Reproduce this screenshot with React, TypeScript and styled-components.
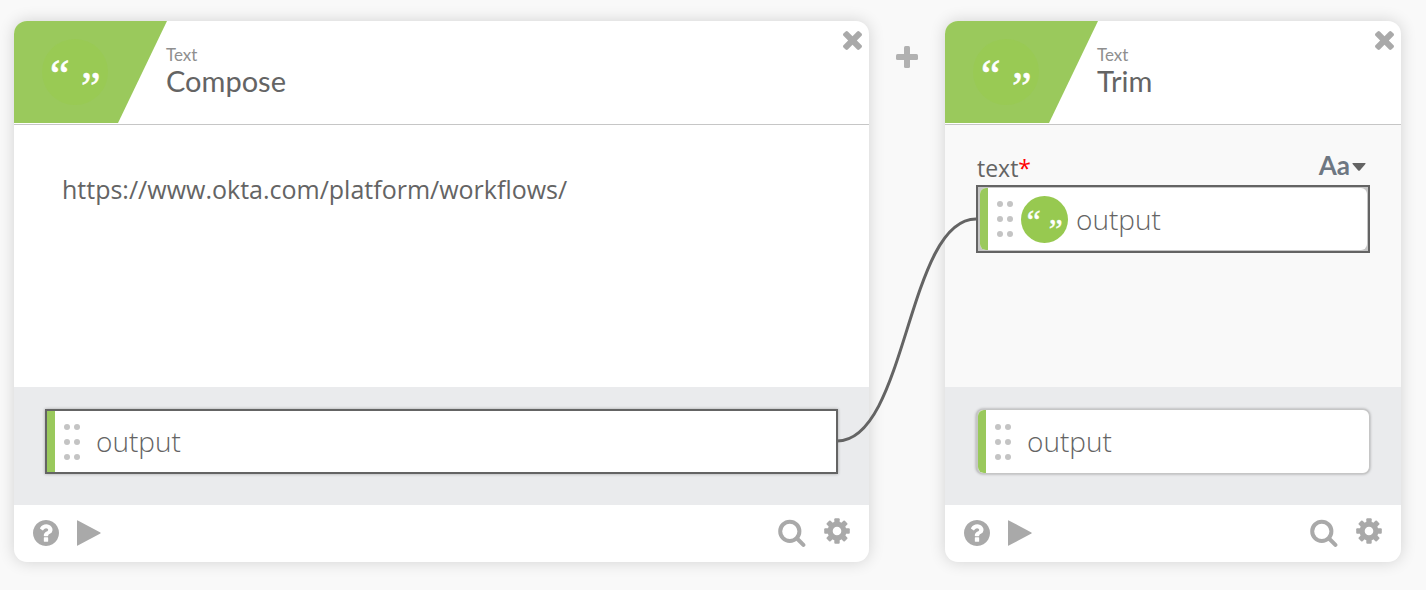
import React, { useState } from "react";
import styled, { createGlobalStyle, css } from "styled-components";

const colors = {
  page: "#f9f9f9",
  green: "#9ac95c",
  badge: "#97c950",
  badgeSoft: "#99ca54",
  ink: "#646464",
  muted: "#8f8f8f",
  icon: "#a9a9a9",
  line: "#c6c6c6",
  tray: "#eaebed",
};

const GlobalStyle = createGlobalStyle`
  *, *::before, *::after { box-sizing: border-box; }
  body {
    margin: 0;
    background: ${colors.page};
    color: ${colors.ink};
    font-family: "Open Sans", "Noto Sans", sans-serif;
  }
  button, input, textarea { font: inherit; color: inherit; }
`;

const Flow = styled.main`
  display: grid;
  grid-template-columns: minmax(0, 1fr) 76px 456px;
  padding: 21px 25px 28px 14px;
`;

const Card = styled.section`
  display: flex;
  flex-direction: column;
  border-radius: 13px;
  background: #fff;
  box-shadow: 0 0 16px rgba(0, 0, 0, 0.16);
`;

const CardHeader = styled.header`
  display: flex;
  align-items: flex-start;
  height: 104px;
  border-bottom: 1px solid ${colors.line};
`;

const Banner = styled.div`
  flex: none;
  width: 153px;
  height: 102px;
  padding: 18px 28px;
  background: ${colors.green};
  border-top-left-radius: 13px;
  clip-path: polygon(0 0, 100% 0, 104px 100%, 0 100%);
`;

const Heading = styled.div`
  flex: 1;
  min-width: 0;
  margin-left: -1px;
  padding-top: 25px;
  font-family: Lato, sans-serif;
`;

const Category = styled.p`
  margin: 0;
  font-size: 17px;
  line-height: 17px;
  color: ${colors.muted};
`;

const Title = styled.h2`
  margin: 0;
  font-size: 29px;
  font-weight: 400;
  line-height: 35px;
  color: ${colors.ink};
`;

const IconButton = styled.button`
  display: flex;
  flex: none;
  padding: 0;
  border: 0;
  background: none;
  color: ${colors.icon};
  cursor: pointer;
`;

const CloseButton = styled(IconButton)`
  margin: 10px 7px 0 0;
`;

const Body = styled.div<{ $tinted?: boolean }>`
  flex: 1;
  min-height: 262px;
  padding: ${(p) => (p.$tinted ? "27px 31px" : "46px 48px")};
  background: ${(p) => (p.$tinted ? colors.page : "#fff")};
`;

const ComposeArea = styled.textarea`
  display: block;
  width: 100%;
  height: 168px;
  padding: 0;
  border: 0;
  outline: 0;
  resize: none;
  background: none;
  font-size: 25px;
  line-height: 36px;
`;

const FieldHead = styled.div`
  display: flex;
  align-items: center;
  justify-content: space-between;
  height: 33px;
  padding: 0 4px 0 1px;
`;

const FieldLabel = styled.label`
  font-size: 23px;
  line-height: 33px;
`;

const Required = styled.span`
  color: #f00;
`;

const TypeButton = styled(IconButton)`
  align-items: flex-end;
  gap: 2px;
  padding-bottom: 7px;
  font-family: Lato, sans-serif;
  font-size: 26px;
  font-weight: 700;
  line-height: 28px;
  color: #6e7782;
`;

const Tray = styled.div`
  padding: 22px 31px 31px;
  background: ${colors.tray};
`;

const Pill = styled.div<{ $linked?: boolean }>`
  display: flex;
  align-items: center;
  height: 65px;
  background: #fff;
  ${(p) =>
    p.$linked
      ? css`
          border: 2px solid ${colors.ink};
          box-shadow: 0 0 3px rgba(0, 0, 0, 0.3);
        `
      : css`
          border: 1px solid ${colors.line};
          border-left-width: 2px;
          border-radius: 7px;
          box-shadow: 0 0 3px rgba(0, 0, 0, 0.35);
        `}
`;

const Socket = styled.div`
  height: 68px;
  border: 2px solid ${colors.ink};
  background: ${colors.line};
  padding: 1px 1px 1px 2px;
`;

const SocketInner = styled.div`
  display: flex;
  align-items: center;
  height: 62px;
  border-radius: 6px;
  overflow: hidden;
  background: #fff;
`;

const Strip = styled.span<{ $round?: boolean }>`
  flex: none;
  align-self: stretch;
  width: 8px;
  background: ${colors.green};
  border-radius: ${(p) => (p.$round ? "6px 0 0 6px" : "0")};
`;

const Grip = styled.span`
  display: grid;
  flex: none;
  grid-template-columns: 6px 6px;
  gap: 9px 4px;
  margin: 0 8px 0 9px;
`;

const Dot = styled.i`
  width: 6px;
  height: 6px;
  border-radius: 50%;
  background: #c4c4c4;
`;

const PillText = styled.span`
  padding: 0 0 2px 8px;
  font-size: 28px;
  font-weight: 300;
  line-height: 58px;
`;

const SocketInput = styled.input`
  flex: 1;
  min-width: 0;
  height: 62px;
  padding: 0 8px;
  border: 0;
  outline: 0;
  background: none;
  font-size: 28px;
  font-weight: 300;
`;

const Footer = styled.footer`
  display: flex;
  align-items: center;
  gap: 18px;
  height: 57px;
  padding: 0 19px 2px;
`;

const Spacer = styled.span`
  flex: 1;
`;

const Gap = styled.div`
  position: relative;
  display: flex;
  justify-content: center;
  align-items: flex-start;
  padding-top: 25px;
`;

const Wire = styled.svg`
  position: absolute;
  top: 190px;
  left: -32px;
  pointer-events: none;
`;

const Badge = styled.svg`
  display: block;
  flex: none;
  overflow: visible;
`;

function QuoteBadge({ size, fill }: { size: number; fill: string }) {
  return (
    <Badge width={size} height={size} viewBox="0 0 66 66" aria-hidden="true">
      <circle cx="33" cy="33" r="33" fill={fill} />
      <g
        fill="#fff"
        stroke="#fff"
        strokeWidth="0.6"
        fontFamily="Liberation Serif, serif"
        fontSize="44"
      >
        <text x="8" y="51">“</text>
        <text x="39" y="63">”</text>
      </g>
    </Badge>
  );
}

const CloseIcon = () => (
  <svg width="19" height="19" viewBox="302 366 1188 1188" fill="currentColor" aria-hidden="true">
    <path d="M1490 1322q0 40-28 68l-136 136q-28 28-68 28t-68-28l-294-294-294 294q-28 28-68 28t-68-28l-136-136q-28-28-28-68t28-68l294-294-294-294q-28-28-28-68t28-68l136-136q28-28 68-28t68 28l294 294 294-294q28-28 68-28t68 28l136 136q28 28 28 68t-28 68l-294 294 294 294q28 28 28 68z" />
  </svg>
);

const PlusIcon = () => (
  <svg width="22" height="22" viewBox="0 0 22 22" fill="#b1b1b1" aria-hidden="true">
    <rect x="8" y="0" width="6" height="22" rx="1.5" />
    <rect x="0" y="8" width="22" height="6" rx="1.5" />
  </svg>
);

const HelpIcon = () => (
  <svg width="26" height="26" viewBox="128 128 1536 1536" fill="currentColor" aria-hidden="true">
    <path d="M1024 1376v-192q0-14-9-23t-23-9h-192q-14 0-23 9t-9 23v192q0 14 9 23t23 9h192q14 0 23-9t9-23zm256-672q0-88-55.5-163t-138.5-116-170-41q-243 0-371 213-15 24 8 42l132 100q7 6 19 6 16 0 25-12 53-68 86-92 34-24 86-24 48 0 85.5 26t37.5 59q0 38-20 61t-68 45q-63 28-115.5 86.5t-52.5 125.5v36q0 14 9 23t23 9h192q14 0 23-9t9-23q0-19 21.5-49.5t54.5-49.5q32-18 49-28.5t46-35 44.5-48 28-60.5 12.5-81zm384 192q0 209-103 385.5t-279.5 279.5-385.5 103-385.5-103-279.5-279.5-103-385.5 103-385.5 279.5-279.5 385.5-103 385.5 103 279.5 279.5 103 385.5z" />
  </svg>
);

const PlayIcon = () => (
  <svg width="24" height="26" viewBox="0 0 24 26" fill="currentColor" aria-hidden="true">
    <path d="M0 .8Q0 0 .8.4L23.4 12.6Q24 13 23.4 13.4L.8 25.6Q0 26 0 25.2z" />
  </svg>
);

const SearchIcon = () => (
  <svg width="28" height="28" viewBox="0 0 28 28" fill="none" stroke="currentColor" aria-hidden="true">
    <circle cx="11.8" cy="12.3" r="9.6" strokeWidth="4" />
    <path d="M19 19.5L25.4 25.9" strokeWidth="4" strokeLinecap="round" />
  </svg>
);

const GearIcon = () => (
  <svg width="26" height="30" viewBox="0 0 26 30" fill="currentColor" aria-hidden="true">
    <circle cx="13" cy="13" r="6.9" fill="none" stroke="currentColor" strokeWidth="5.2" />
    {[0, 45, 90, 135, 180, 225, 270, 315].map((a) => (
      <rect key={a} x="10.3" y="0.2" width="5.4" height="6" rx="1" transform={`rotate(${a} 13 13)`} />
    ))}
  </svg>
);

const CaretIcon = () => (
  <svg width="14" height="16" viewBox="0 0 14 16" fill={colors.ink} aria-hidden="true">
    <path d="M1 0H13Q14 .2 13.4 1L7.8 7.4Q7 8 6.2 7.4L.6 1Q0 .2 1 0z" />
  </svg>
);

function GripDots() {
  return (
    <Grip>
      {[0, 1, 2, 3, 4, 5].map((n) => (
        <Dot key={n} />
      ))}
    </Grip>
  );
}

function FlowCard(props: { title: string; linked?: boolean; children: React.ReactNode; tinted?: boolean }) {
  return (
    <Card aria-label={props.title}>
      <CardHeader>
        <Banner>
          <QuoteBadge size={66} fill={colors.badgeSoft} />
        </Banner>
        <Heading>
          <Category>Text</Category>
          <Title>{props.title}</Title>
        </Heading>
        <CloseButton type="button" aria-label="Remove card">
          <CloseIcon />
        </CloseButton>
      </CardHeader>
      <Body $tinted={props.tinted}>{props.children}</Body>
      <Tray>
        <Pill $linked={props.linked}>
          <Strip $round={!props.linked} />
          <GripDots />
          <PillText>output</PillText>
        </Pill>
      </Tray>
      <Footer>
        <IconButton type="button" aria-label="Help">
          <HelpIcon />
        </IconButton>
        <IconButton type="button" aria-label="Run card">
          <PlayIcon />
        </IconButton>
        <Spacer />
        <IconButton type="button" aria-label="Search">
          <SearchIcon />
        </IconButton>
        <IconButton type="button" aria-label="Settings">
          <GearIcon />
        </IconButton>
      </Footer>
    </Card>
  );
}

export default function App() {
  const [text, setText] = useState("https://www.okta.com/platform/workflows/");
  return (
    <>
      <GlobalStyle />
      <Flow>
        <FlowCard title="Compose" linked>
          <ComposeArea
            aria-label="Compose text"
            spellCheck={false}
            value={text}
            onChange={(e) => setText(e.target.value)}
          />
        </FlowCard>
        <Gap>
          <IconButton type="button" aria-label="Add card">
            <PlusIcon />
          </IconButton>
          <Wire width="139" height="240" viewBox="0 0 139 240" fill="none" aria-hidden="true">
            <path d="M0 230C70 230 70 8 139 8" stroke={colors.ink} strokeWidth="3" />
          </Wire>
        </Gap>
        <FlowCard title="Trim" tinted>
          <FieldHead>
            <FieldLabel htmlFor="trim-text">
              text<Required>*</Required>
            </FieldLabel>
            <TypeButton type="button" aria-label="Aa, value type" aria-haspopup="menu">
              Aa
              <CaretIcon />
            </TypeButton>
          </FieldHead>
          <Socket>
            <SocketInner>
              <Strip />
              <GripDots />
              <QuoteBadge size={47} fill={colors.badge} />
              <SocketInput id="trim-text" value="output" readOnly />
            </SocketInner>
          </Socket>
        </FlowCard>
      </Flow>
    </>
  );
}
